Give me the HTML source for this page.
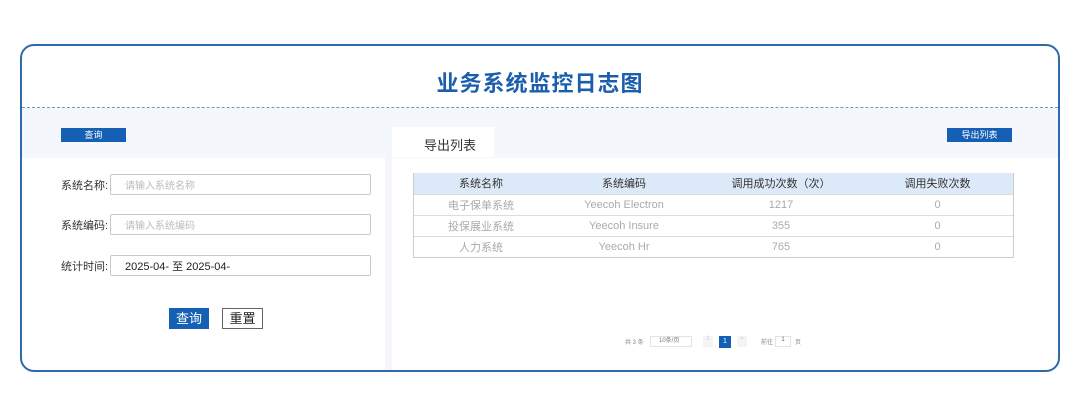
<!DOCTYPE html>
<html><head><meta charset="utf-8"><style>
*{margin:0;padding:0;box-sizing:border-box}
body{width:1080px;height:413px;background:#fff;position:relative;overflow:hidden;font-family:"Liberation Sans","Noto Sans CJK SC",sans-serif}
.a{position:absolute}
.card{left:20px;top:44px;width:1040px;height:328px;border:2px solid #2f6aae;border-radius:14px;overflow:hidden;background:#fff}
.title{left:0;right:0;top:24px;text-align:center;font-size:22px;font-weight:bold;color:#1b5ead;line-height:28px;letter-spacing:1px}
.dash{left:0;right:0;top:61px;border-top:1px dashed #6f97c4}
.bg{left:0;right:0;top:62px;height:50px;background:#f4f7fb}
.btn{background:#1560b4;color:#fff;font-size:9px;text-align:center;line-height:14px}
.lbl{font-size:11px;color:#333;left:39px;width:50px;height:21px;display:flex;align-items:center}
.inp{left:88px;width:261px;height:21px;border:1px solid #c9c9c9;border-radius:2px;background:#fff;font-size:10px;color:#bbb;padding-left:14px;display:flex;align-items:center}
table{border-collapse:collapse;width:599px;font-size:11px;table-layout:fixed}
th{background:#dbe9f8;font-weight:normal;color:#333;height:21px}
td{color:#aaa;height:21px;text-align:center;border-top:1px solid #ddd}
</style></head><body>
<div class="a card">
<div class="a bg"></div>
<div class="a dash"></div>
<div class="a title">业务系统监控日志图</div>
<div class="a btn" style="left:39px;top:82px;width:65px">查询</div>
<div class="a btn" style="left:925px;top:82px;width:65px">导出列表</div>
<div class="a" style="left:363px;top:107px;width:7px;height:220px;background:#f4f6f9"></div>
<div class="a" style="left:370px;top:81px;width:102px;height:30px;background:#fff;font-size:13px;color:#333;padding:8px 0 0 32px">导出列表</div>
<div class="a lbl" style="top:128px">系统名称:</div>
<div class="a inp" style="top:128px">请输入系统名称</div>
<div class="a lbl" style="top:168px">系统编码:</div>
<div class="a inp" style="top:168px">请输入系统编码</div>
<div class="a lbl" style="top:209px">统计时间:</div>
<div class="a inp" style="top:209px;color:#222;font-size:11px">2025-04- 至 2025-04-</div>
<div class="a" style="left:147px;top:262px;width:40px;height:21px;background:#1560b4;color:#fff;font-size:13px;text-align:center;line-height:21px">查询</div>
<div class="a" style="left:200px;top:262px;width:41px;height:21px;border:1px solid #666;color:#222;font-size:13px;text-align:center;line-height:19px">重置</div>
<div class="a" style="left:391px;top:127px;border:1px solid #ccc;border-top:none">
<table><colgroup><col style="width:134px"><col style="width:152px"><col style="width:162px"><col style="width:151px"></colgroup>
<tr><th>系统名称</th><th>系统编码</th><th>调用成功次数（次）</th><th>调用失败次数</th></tr>
<tr><td>电子保单系统</td><td>Yeecoh Electron</td><td>1217</td><td>0</td></tr>
<tr><td>投保展业系统</td><td>Yeecoh Insure</td><td>355</td><td>0</td></tr>
<tr><td>人力系统</td><td>Yeecoh Hr</td><td>765</td><td>0</td></tr></table></div>
<div class="a" style="left:603px;top:291px;font-size:6px;color:#888">共 3 条</div>
<div class="a" style="left:628px;top:290px;width:42px;height:11px;border:1px solid #e3e3e3;font-size:6px;color:#777;padding-left:8px;line-height:9px">10条/页</div>
<div class="a" style="left:681px;top:290px;width:10px;height:11px;background:#f4f4f4;font-size:6px;color:#ccc;text-align:center">1</div>
<div class="a" style="left:697px;top:290px;width:12px;height:12px;background:#1560b4;font-size:7px;color:#fff;text-align:center;line-height:12px">1</div>
<div class="a" style="left:715px;top:290px;width:10px;height:11px;background:#f4f4f4;font-size:6px;color:#ccc;text-align:center">&gt;</div>
<div class="a" style="left:739px;top:291px;font-size:6px;color:#888">前往</div>
<div class="a" style="left:753px;top:290px;width:16px;height:11px;border:1px solid #e3e3e3;font-size:6px;color:#666;text-align:center">1</div>
<div class="a" style="left:773px;top:291px;font-size:6px;color:#888">页</div>
</div>
</body></html>
